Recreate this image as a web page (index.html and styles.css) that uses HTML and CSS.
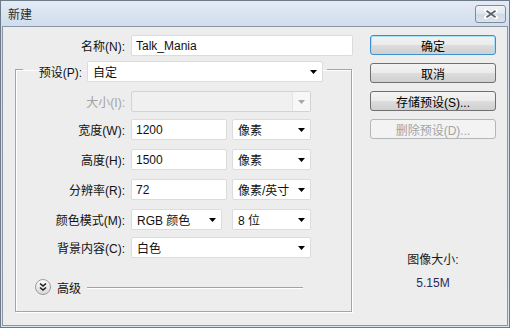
FILE: index.html
```html
<!DOCTYPE html>
<html lang="zh-CN">
<head>
    <meta charset="UTF-8">
    <title>新建</title>
    <link rel="stylesheet" href="styles.css">
</head>
<body>
    <div class="window">
        <div class="titlebar">
            <span class="title">新建</span>
            <button class="close">
                <svg width="14" height="10" viewBox="0 0 14 10">
                    <path d="M2 1.5L12 8.5M12 1.5L2 8.5" stroke="#fff" stroke-width="4" stroke-linecap="round"/>
                    <path d="M2.5 1.8L11.5 8.2M11.5 1.8L2.5 8.2" stroke="#5f636a" stroke-width="2"/>
                </svg>
            </button>
        </div>
        <div class="client">
            <div class="main">
                <div class="name-row">
                    <span class="label name-label">名称(N):</span>
                    <div class="field name-field">Talk_Mania</div>
                </div>
                <fieldset class="preset-box">
                    <legend class="preset">
                        <span class="preset-inner">
                            <span class="label preset-label">预设(P):</span>
                            <span class="select preset-select">自定</span>
                        </span>
                    </legend>
                    <div class="row">
                        <span class="label disabled">大小(I):</span>
                        <span class="select select-disabled wide"><span class="drop"></span></span>
                    </div>
                    <div class="row row-tight">
                        <span class="label">宽度(W):</span>
                        <span class="field num">1200</span>
                        <span class="select unit">像素</span>
                    </div>
                    <div class="row">
                        <span class="label">高度(H):</span>
                        <span class="field num">1500</span>
                        <span class="select unit">像素</span>
                    </div>
                    <div class="row">
                        <span class="label">分辨率(R):</span>
                        <span class="field num">72</span>
                        <span class="select unit">像素/英寸</span>
                    </div>
                    <div class="row">
                        <span class="label">颜色模式(M):</span>
                        <span class="select mode">RGB 颜色</span>
                        <span class="select unit">8 位</span>
                    </div>
                    <div class="row row-tight">
                        <span class="label">背景内容(C):</span>
                        <span class="select wide">白色</span>
                    </div>
                    <div class="advanced">
                        <svg class="expand" width="16" height="16" viewBox="0 0 16 16">
                            <defs>
                                <linearGradient id="knob" x1="0" y1="0" x2="0" y2="1">
                                    <stop offset="0" stop-color="#ffffff"/>
                                    <stop offset="1" stop-color="#d6d6d6"/>
                                </linearGradient>
                            </defs>
                            <circle cx="8" cy="8" r="7.5" fill="url(#knob)" stroke="#9c9c9c"/>
                            <path d="M5 4.5L8 7L11 4.5M5 8.5L8 11L11 8.5" fill="none" stroke="#1c1c1c" stroke-width="1.6"/>
                        </svg>
                        <span class="adv-text">高级</span>
                        <span class="adv-line"></span>
                    </div>
                </fieldset>
            </div>
            <div class="side">
                <button class="btn btn-default">确定</button>
                <button class="btn">取消</button>
                <button class="btn">存储预设(S)...</button>
                <button class="btn" disabled>删除预设(D)...</button>
                <div class="info">
                    <div>图像大小:</div>
                    <div class="size">5.15M</div>
                </div>
            </div>
        </div>
    </div>
</body>
</html>
```

FILE: styles.css
```css
body {
    margin: 0;
    background: #dbe6f3;
    font-family: "Liberation Sans", "Noto Sans CJK SC", sans-serif;
    font-size: 12px;
    color: #111;
}
.window {
    width: 510px;
    height: 328px;
    box-sizing: border-box;
    border: 1px solid #6f7a88;
    background: linear-gradient(#e3ebf5, #ccdaeb 30px, #d9e4f1);
    padding: 0 1px 1px 1px;
}
.titlebar {
    height: 25px;
    display: flex;
    align-items: center;
    justify-content: space-between;
}
.title {
    padding-left: 6px;
    color: #2b2b2b;
    font-size: 12px;
}
.close {
    width: 31px;
    height: 18px;
    margin-right: 2px;
    margin-top: 1px;
    padding: 0;
    border: 1px solid #7f8b99;
    border-radius: 3px;
    background: linear-gradient(#f2f5f9, #dde5ee 50%, #cfd9e5 51%, #dbe3ed);
    display: flex;
    align-items: center;
    justify-content: center;
}
.client {
    height: 300px;
    box-sizing: border-box;
    border: 1px solid #8996a5;
    background: #ededed;
    display: flex;
    padding-top: 8px;
}
.main {
    width: 350px;
    box-sizing: border-box;
    padding-left: 12px;
}
.label {
    text-align: right;
    white-space: nowrap;
}
.disabled {
    color: #a3a3a3;
}
.name-row {
    display: flex;
    align-items: center;
}
.name-label {
    width: 110px;
    margin-right: 6px;
}
.field, .select {
    height: 21px;
    box-sizing: border-box;
    border: 1px solid #dcdcdc;
    border-radius: 2px;
    background: #fff;
    display: flex;
    align-items: center;
    padding-left: 4px;
    white-space: nowrap;
}
.name-field {
    width: 222px;
}
.select {
    position: relative;
    padding-left: 5px;
}
.select::after {
    content: "";
    position: absolute;
    right: 5px;
    top: 8px;
    width: 7px;
    height: 4px;
    background: #000;
    clip-path: polygon(0 0, 100% 0, 50% 100%);
}
.preset-box {
    width: 337px;
    box-sizing: border-box;
    margin: 1px 0 0;
    padding: 9px 0 16px;
    border: 1px solid #a5a5a5;
    box-shadow: inset 1px 1px 0 #fff, 1px 1px 0 #fff;
    min-inline-size: 0;
}
.preset {
    margin-left: 7px;
    padding: 4px 4px 0 0;
}
.preset-inner {
    display: flex;
    align-items: center;
}
.preset-label {
    width: 59px;
    margin-right: 5px;
}
.preset-select {
    width: 236px;
}
.row {
    display: flex;
    align-items: center;
    margin-bottom: 9px;
}
.row-tight {
    margin-top: -2px;
}
.row .label {
    width: 109px;
    margin-right: 6px;
}
.wide {
    width: 180px;
}
.num {
    width: 96px;
    margin-right: 5px;
}
.mode {
    width: 91px;
    margin-right: 10px;
}
.unit {
    width: 79px;
}
.select-disabled {
    background: #f0f0f0;
    border-color: #d3d3d3;
}
.select-disabled::after {
    background: #a8a8a8;
}
.drop {
    position: absolute;
    right: 0;
    top: 0;
    bottom: 0;
    width: 17px;
    background: #f7f7f7;
    border-left: 1px solid #e4e4e4;
}
.advanced {
    display: flex;
    align-items: center;
    padding-left: 19px;
    margin-top: 21px;
    height: 16px;
}
.adv-text {
    margin-left: 6px;
}
.adv-line {
    width: 216px;
    height: 1px;
    margin-left: 6px;
    background: #a3a3a3;
    box-shadow: 0 1px 0 #fff;
}
.side {
    width: 126px;
    margin-left: 17px;
    display: flex;
    flex-direction: column;
    gap: 8px;
}
.btn {
    height: 20px;
    padding: 0;
    font-family: inherit;
    font-size: 12px;
    color: #000;
    border: 1px solid #707070;
    border-radius: 3px;
    background: linear-gradient(#f3f3f3, #ebebeb 50%, #dddddd 51%, #cfcfcf);
}
.btn-default {
    border-color: #3c8fd0;
    box-shadow: inset 0 0 0 1px #a6e1f8;
}
.btn:disabled {
    color: #a3a3a3;
    border-color: #b3b7ba;
    background: #f3f3f3;
}
.info {
    margin-top: 105px;
    text-align: center;
    line-height: 16px;
    color: #1a1a1a;
}
.size {
    margin-top: 7px;
    color: #2a2a5a;
}
```
